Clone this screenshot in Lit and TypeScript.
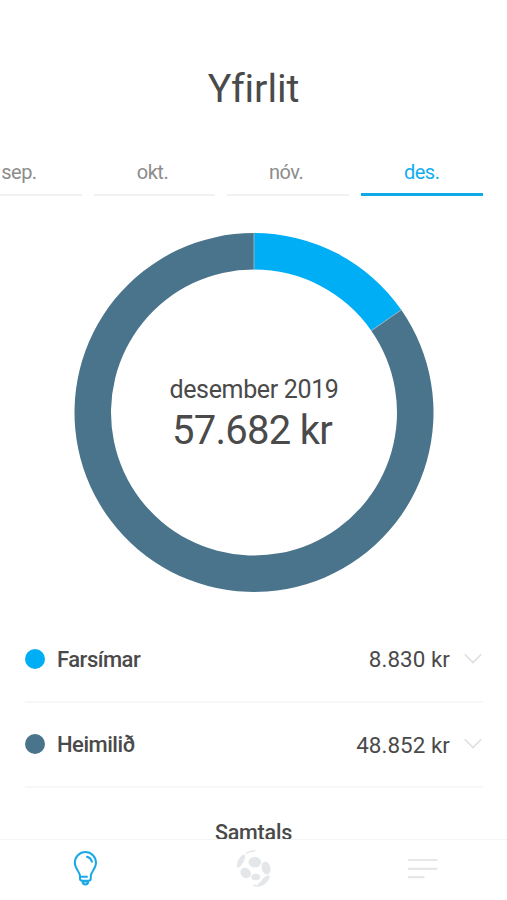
import { LitElement, html, css, svg } from "lit";
import { customElement, property } from "lit/decorators.js";
import { classMap } from "lit/directives/class-map.js";

interface Slice {
  label: string;
  amount: string;
  value: number;
  color: string;
}

const slices: Slice[] = [
  { label: "Farsímar", amount: "8.830 kr", value: 8830, color: "#00aef5" },
  { label: "Heimilið", amount: "48.852 kr", value: 48852, color: "#4a748b" },
];

@customElement("donut-chart")
class DonutChart extends LitElement {
  @property({ attribute: false }) data: Slice[] = [];

  static styles = css`
    :host { display: grid; width: 360px; height: 360px; }
    svg, .center { grid-area: 1 / 1; }
    .center {
      display: flex; flex-direction: column; align-items: center;
      padding-top: 142px; color: #4a4a4a; white-space: nowrap;
    }
    .period { font-size: 25px; line-height: 30px; letter-spacing: -0.35px; }
    .total { font-size: 40px; line-height: 48px; margin: 2px 4px 0 0; letter-spacing: -0.75px; }
  `;

  render() {
    const total = this.data.reduce((sum, s) => sum + s.value, 0);
    const point = (r: number, t: number) =>
      `${(180 + r * Math.sin(t * 2 * Math.PI)).toFixed(2)} ${(179.5 - r * Math.cos(t * 2 * Math.PI)).toFixed(2)}`;
    let start = 0;
    const paths = this.data.map((s) => {
      const from = start;
      const to = (start += s.value / total);
      const large = to - from > 0.5 ? 1 : 0;
      const d = `M${point(179.5, from)}A179.5 179.5 0 ${large} 1 ${point(179.5, to)}L${point(143, to)}A143 143 0 ${large} 0 ${point(143, from)}Z`;
      return svg`<path d=${d} fill=${s.color}></path>`;
    });
    let edge = 0;
    const seams = this.data.map((s) => {
      const line = svg`<path d=${`M${point(179.5, edge)}L${point(143, edge)}`} stroke="#8fb4c6" stroke-width="1"></path>`;
      edge += s.value / total;
      return line;
    });
    return html`<svg width="360" height="360" viewBox="0 0 360 360">${paths}${seams}</svg>
      <div class="center">
        <div class="period">desember 2019</div>
        <div class="total">57.682 kr</div>
      </div>`;
  }
}

@customElement("app-root")
class AppRoot extends LitElement {
  static styles = css`
    :host {
      display: flex; flex-direction: column; height: 900px; width: 507px;
      overflow: hidden; background: #fff; color: #4a4a4a;
      font-family: Roboto, "Liberation Sans", sans-serif;
    }
    main { flex: 1; min-height: 0; overflow: hidden; display: flex; flex-direction: column; }
    h1 { margin: 65px 0 0; font-size: 39.5px; line-height: 48px; font-weight: 400; text-align: center; letter-spacing: -0.1px; }
    .tabs { display: flex; gap: 12px; margin: 47px 24.5px 0 0; justify-content: flex-end; }
    .tab {
      flex: 0 0 121.6px; box-sizing: border-box; height: 36px; font-size: 20px; line-height: 24px; letter-spacing: -0.5px;
      text-align: center; color: #8c8c8c; border-bottom: 2px solid #f1f1f2; padding-right: 4px;
    }
    .tab.active { color: #12adf0; border-bottom: 3px solid #10aaeb; padding: 0; }
    donut-chart { margin: 37px 0 0 74px; flex: none; }
    .list { margin: 24px 24px 0 25px; }
    .row { display: flex; align-items: center; box-sizing: border-box; height: 85.5px; border-bottom: 2px solid #f7f7f7; font-size: 22px; line-height: 28px; }
    .dot { width: 20px; height: 20px; border-radius: 50%; margin-right: 12px; }
    .label { flex: 1; font-weight: 500; letter-spacing: -0.5px; padding-top: 2px; }
    .amount { margin-right: 14px; letter-spacing: 0.05px; padding-top: 1px; font-size: 22.4px; }
    .chevron { display: block; margin-right: 1px; }
    .sum { margin-top: 31px; text-align: center; font-size: 21.5px; line-height: 28px; font-weight: 500; letter-spacing: -0.2px; }
    nav { flex: none; height: 61px; box-sizing: border-box; border-top: 1.5px solid #f4f4f4; display: grid; grid-template-columns: repeat(3, 1fr); }
    nav svg { display: block; margin: 9px auto 0; }
    nav .ball { margin-top: 10px; }
  `;

  render() {
    return html`
      <main>
        <h1>Yfirlit</h1>
        <div class="tabs">
          ${["sep.", "okt.", "nóv.", "des."].map(
            (m) => html`<div class=${classMap({ tab: true, active: m === "des." })}>${m}</div>`
          )}
        </div>
        <donut-chart .data=${slices}></donut-chart>
        <div class="list">
          ${slices.map(
            (s) => html`<div class="row">
              <span class="dot" style="background:${s.color}"></span>
              <span class="label">${s.label}</span>
              <span class="amount">${s.amount}</span>
              <svg class="chevron" width="18" height="12" viewBox="0 0 18 12" fill="none" stroke="#dfdfdf" stroke-width="1.6">
                <path d="M.7 1.2 9 9.6l8.300-8.400"></path>
              </svg>
            </div>`
          )}
        </div>
        <div class="sum">Samtals</div>
      </main>
      <nav>
        <svg width="36" height="40" viewBox="0 0 36 40" fill="none" stroke="#1aa9e6" stroke-width="2" stroke-linecap="round" stroke-linejoin="round">
          <path d="M13 29.500v-2.500c0-3.800-5.200-7.500-5.200-13.300A10.600 10.600 0 0 1 29 13.700c0 5.800-5.200 9.500-5.200 13.300v2.500c0 1.500-1.300 2.300-2.500 2.300h-5.800c-1.300 0-2.500-.800-2.500-2.300Z"></path>
          <path d="M13.500 27.800h6.500M20 7.800c2.600.7 4.300 2.500 5 5"></path>
          <path d="M15.500 32.500c.3 2 1.400 3 2.900 3s2.600-1 2.900-3Z"></path>
        </svg>
        <svg class="ball" width="40" height="40" viewBox="30 30 120 120" fill="#e4e7e9">
          <path d="M60 43c6 4 4 14-2 24-5 9-11 16-17 17-6-15 4-34 19-41Z"></path>
          <path d="M62 41c8-7 21-11 34-10l-5 4c-9 0-16 2-22 6Z"></path>
          <ellipse cx="92.500" cy="66.500" rx="19" ry="16"></ellipse>
          <ellipse cx="126" cy="84" rx="13" ry="20" transform="rotate(-12 126 84)"></ellipse>
          <ellipse cx="65" cy="99" rx="17" ry="14.500" transform="rotate(42 65 99)"></ellipse>
          <ellipse cx="95" cy="111" rx="13.500" ry="10"></ellipse>
          <path d="M137 107c-1 15-14 29-33 33-7-1-4-7 4-13 5-4 7-10 13-15 5-4 11-6 16-5ZM84 134l16 1-1 5c-6 0-11-2-15-6Z"></path>
        </svg>
        <svg width="32" height="40" viewBox="0 0 32 40" stroke="#e5e7e8" stroke-width="2.200">
          <path d="M1 11h29.500M1 19.800h29.500M1 28.200h16.500"></path>
        </svg>
      </nav>
    `;
  }
}
